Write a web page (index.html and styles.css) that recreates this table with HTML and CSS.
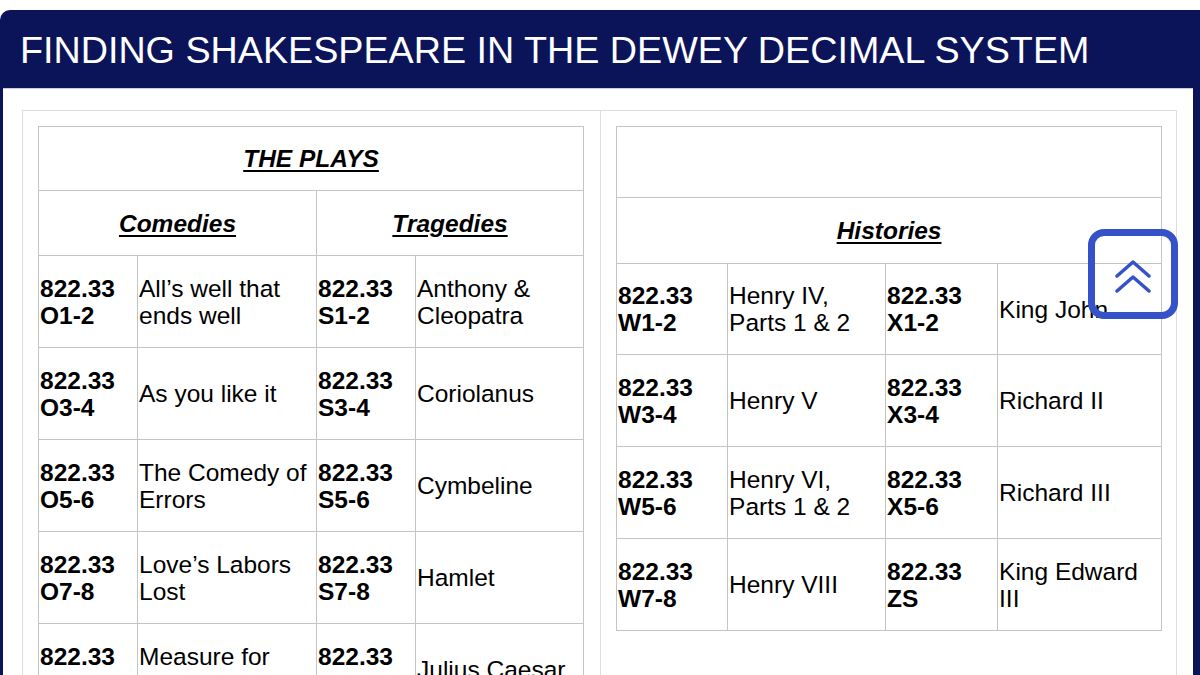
FILE: index.html
```html
<!DOCTYPE html>
<html>
<head>
<meta charset="utf-8">
<link rel="stylesheet" href="styles.css">
</head>
<body>
<div class="frame">
  <header class="banner"><h1>FINDING SHAKESPEARE IN THE DEWEY DECIMAL SYSTEM</h1></header>
  <div class="panel">
    <div class="layout">
      <div class="cell">
        <table class="grid plays">
          <colgroup><col class="c1"><col class="c2"><col class="c3"><col class="c4"></colgroup>
          <tr class="r-title"><th colspan="4"><span class="hd">THE PLAYS</span></th></tr>
          <tr class="r-sub"><th colspan="2"><span class="hd">Comedies</span></th><th colspan="2"><span class="hd">Tragedies</span></th></tr>
          <tr class="r-data"><td class="num">822.33<br>O1-2</td><td>All’s well that ends well</td><td class="num">822.33<br>S1-2</td><td>Anthony &amp; Cleopatra</td></tr>
          <tr class="r-data"><td class="num">822.33<br>O3-4</td><td>As you like it</td><td class="num">822.33<br>S3-4</td><td>Coriolanus</td></tr>
          <tr class="r-data"><td class="num">822.33<br>O5-6</td><td>The Comedy of Errors</td><td class="num">822.33<br>S5-6</td><td>Cymbeline</td></tr>
          <tr class="r-data"><td class="num">822.33<br>O7-8</td><td>Love’s Labors Lost</td><td class="num">822.33<br>S7-8</td><td>Hamlet</td></tr>
          <tr class="r-data"><td class="num">822.33<br>P1-2</td><td>Measure for Measure</td><td class="num">822.33<br>T1-2</td><td>Julius Caesar</td></tr>
        </table>
      </div>
      <div class="cell">
        <table class="grid hist">
          <colgroup><col class="h1"><col class="h2"><col class="h3"><col class="h4"></colgroup>
          <tr class="r-blank"><td colspan="4"></td></tr>
          <tr class="r-sub2"><th colspan="4"><span class="hd">Histories</span></th></tr>
          <tr class="r-data1"><td class="num">822.33<br>W1-2</td><td>Henry IV, Parts 1 &amp; 2</td><td class="num">822.33<br>X1-2</td><td>King John</td></tr>
          <tr class="r-data"><td class="num">822.33<br>W3-4</td><td>Henry V</td><td class="num">822.33<br>X3-4</td><td>Richard II</td></tr>
          <tr class="r-data"><td class="num">822.33<br>W5-6</td><td>Henry VI, Parts 1 &amp; 2</td><td class="num">822.33<br>X5-6</td><td>Richard III</td></tr>
          <tr class="r-data"><td class="num">822.33<br>W7-8</td><td>Henry VIII</td><td class="num">822.33<br>ZS</td><td>King Edward III</td></tr>
        </table>
      </div>
    </div>
  </div>
</div>
<a class="totop" href="#" aria-label="Back to top">
  <svg width="36" height="34" viewBox="0 0 36 34"><path d="M2 16 L18 2 L34 16 M2 31 L18 17 L34 31" fill="none" stroke="#3552c8" stroke-width="3.5" stroke-linecap="round" stroke-linejoin="round"/></svg>
</a>
</body>
</html>
```
FILE: styles.css
```css
html, body {
  margin: 0;
  padding: 0;
  background: #ffffff;
  overflow: hidden;
}
body {
  font-family: "Liberation Sans", Arial, sans-serif;
  color: #000;
  height: 675px;
}
.frame {
  margin-top: 10px;
  background: #0b1459;
  border-top-left-radius: 10px;
  padding: 0 7px 0 3px;
  height: 720px;
}
.banner {
  height: 78px;
  display: flex;
  align-items: center;
}
.banner h1 {
  margin: 0;
  padding: 4px 0 0 17px;
  font-weight: normal;
  font-size: 37.7px;
  color: #ffffff;
  letter-spacing: 0;
  line-height: 1;
}
.panel {
  background: #ffffff;
  height: 700px;
  padding: 21px 16px 0 19px;
  border-top: 1px solid #c9cbe3;
}
.layout {
  display: grid;
  grid-template-columns: 1fr 1fr;
  border: 1px solid #dddddd;
  height: 680px;
}
.cell {
  padding: 15px 16px 15px 15px;
}
.cell + .cell {
  border-left: 1px solid #dddddd;
}
.grid {
  border-collapse: collapse;
  table-layout: fixed;
  width: 545px;
  font-size: 24.5px;
  line-height: 27px;
}
.grid td, .grid th {
  border: 1px solid #c4c4c4;
  padding: 0 1px;
  vertical-align: middle;
  text-align: left;
}
.grid th {
  text-align: center;
}
.hd {
  font-weight: bold;
  font-style: italic;
  text-decoration: underline;
  text-decoration-thickness: 2px;
  text-underline-offset: 3px;
}
.num {
  font-weight: bold;
}
.c1 { width: 99px; }
.c2 { width: 179px; }
.c3 { width: 99px; }
.c4 { width: 168px; }
.h1 { width: 111px; }
.h2 { width: 158px; }
.h3 { width: 112px; }
.h4 { width: 164px; }
.r-title { height: 64px; }
.r-sub { height: 65px; }
.r-data { height: 92px; }
.r-data1 { height: 91px; }
.r-blank { height: 71px; }
.r-sub2 { height: 66px; }
.totop {
  position: absolute;
  left: 1088px;
  top: 229px;
  width: 90px;
  height: 90px;
  box-sizing: border-box;
  border: 7px solid #3552c8;
  border-radius: 16px;
  display: flex;
  align-items: center;
  justify-content: center;
}
.totop svg {
  display: block;
  margin-top: 6px;
}
```
